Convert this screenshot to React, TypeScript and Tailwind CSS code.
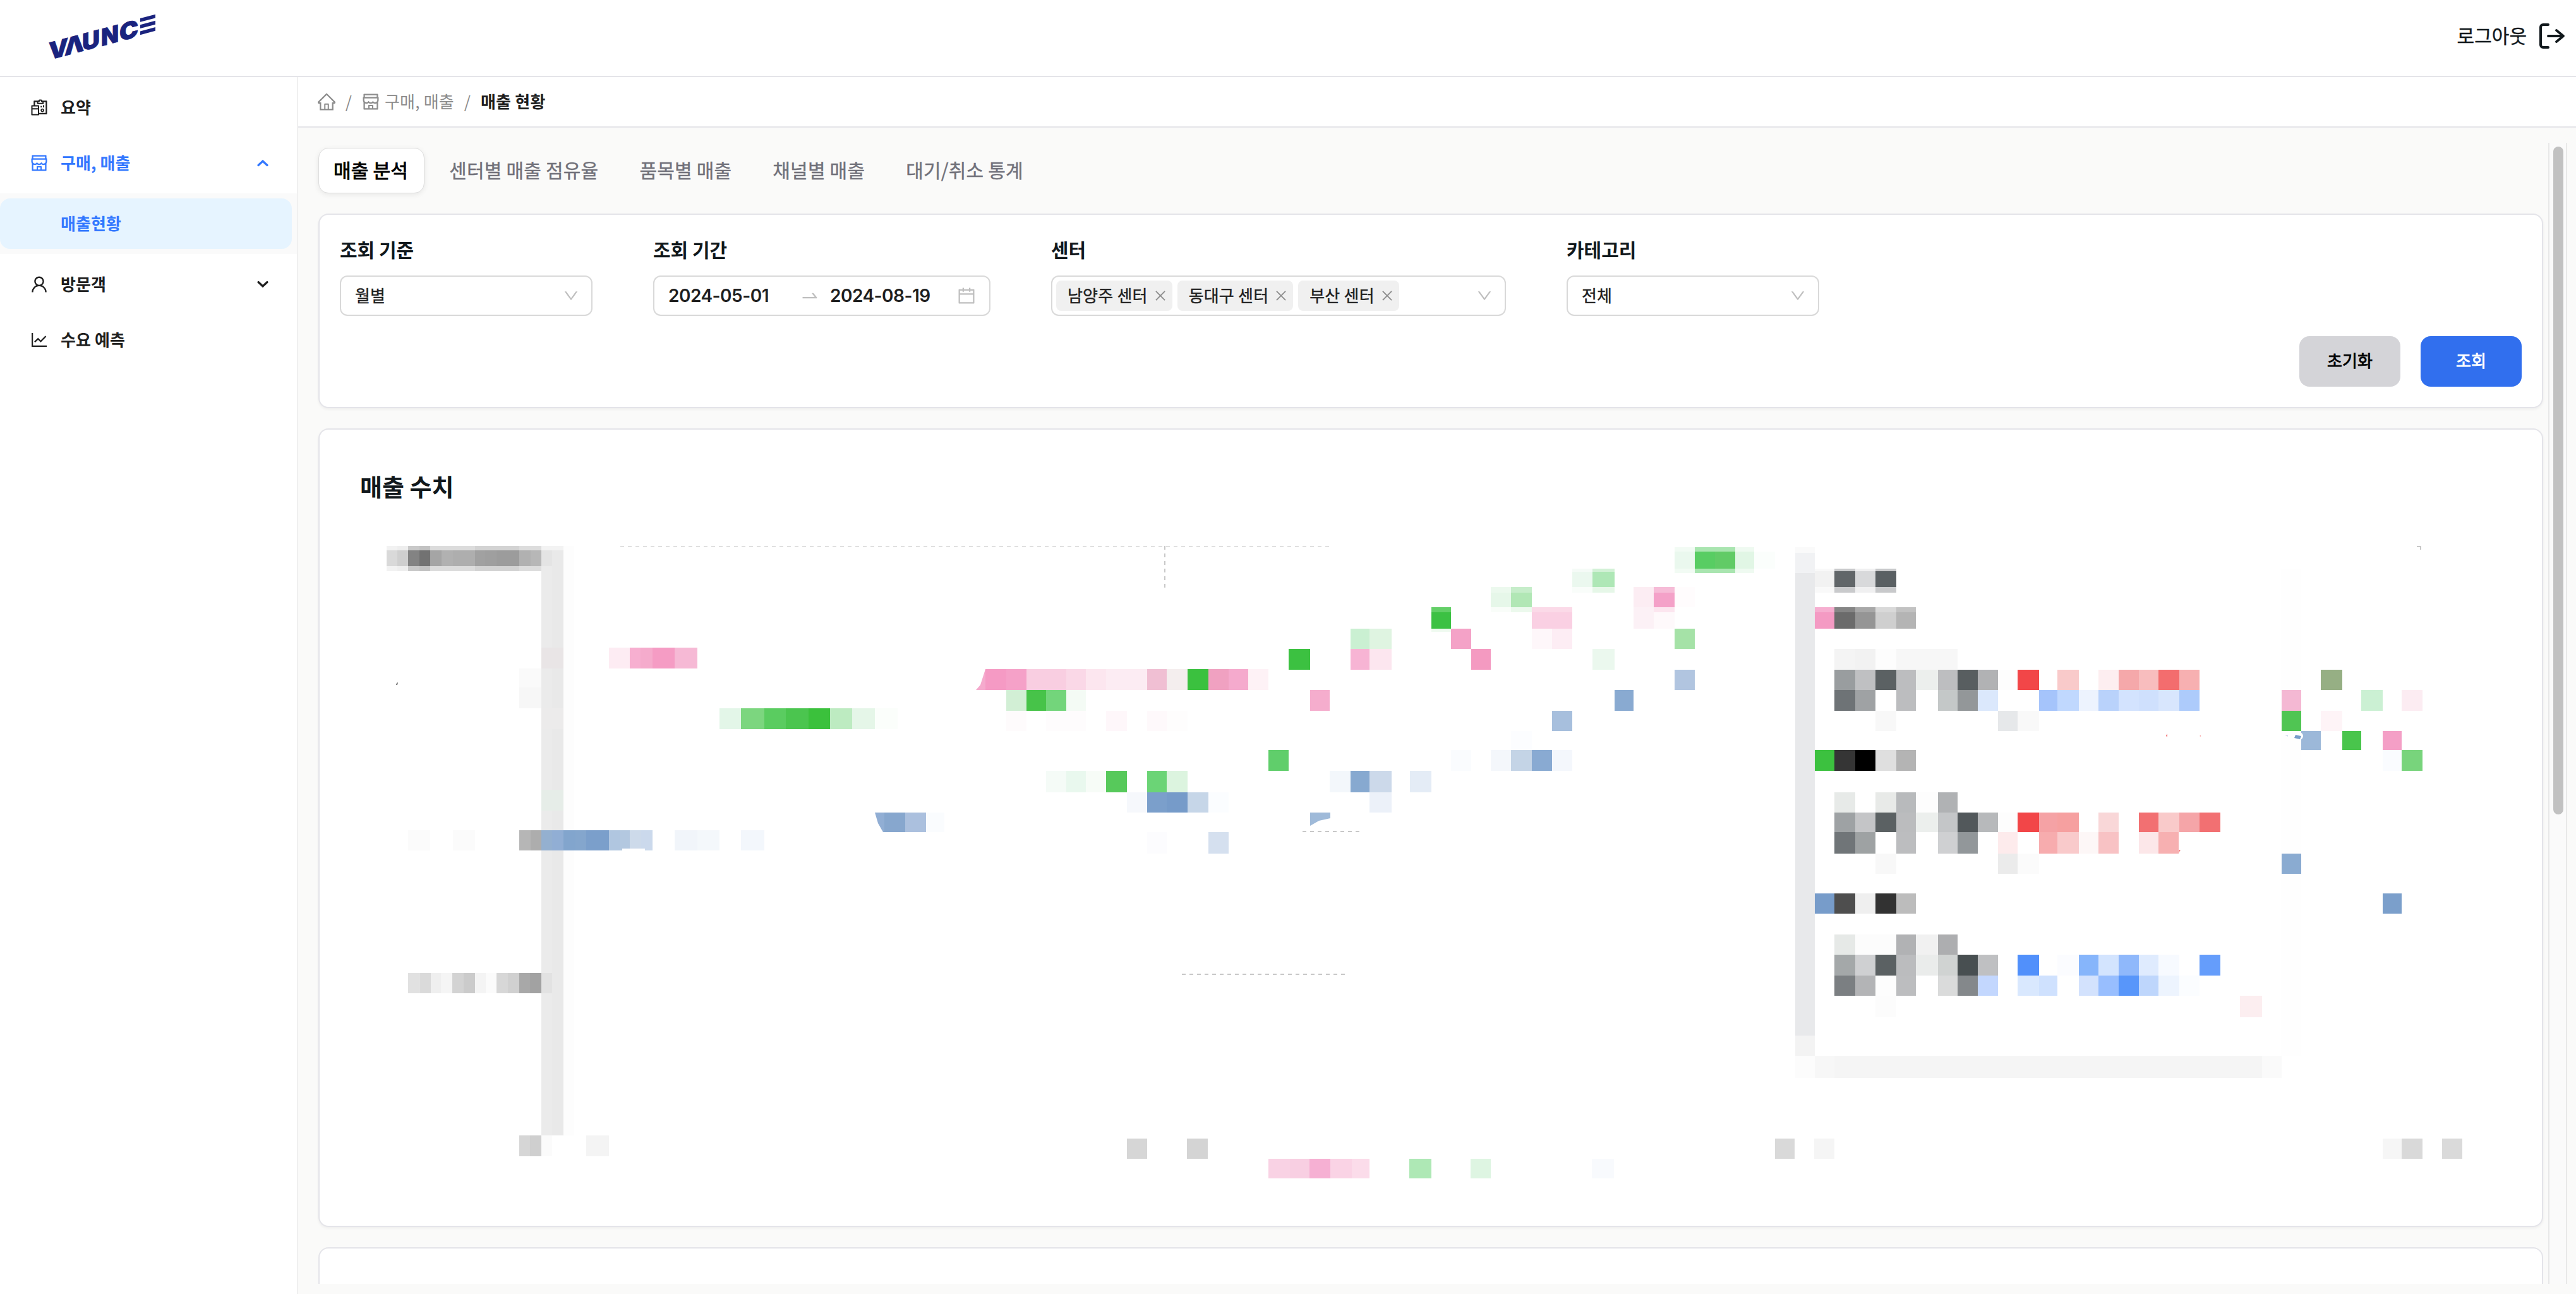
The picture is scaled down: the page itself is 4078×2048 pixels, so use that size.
import type { ReactNode } from "react";
import {
  AiOutlineCalendar,
  AiOutlineClose,
  AiOutlineDown,
  AiOutlineHome,
  AiOutlineLineChart,
  AiOutlineReconciliation,
  AiOutlineShop,
  AiOutlineSwapRight,
  AiOutlineUser,
} from "react-icons/ai";

/* Trims the built-in margin of the icon set. */
const ICON_BOX = "64 64 896 896";

/* ---------- Chart data ---------- */

type Band = [top: number, bottom: number, cells: [number, number, string][]];

const BANDS: Band[] = [
  // y axis
  [864, 1797, [[857, 874, "#ebebeb"], [874, 892, "#e9e9e9"], [892, 909, "#fdfdfd"]]],
  [864, 871, [[857, 892, "#f3f3f3"]]],
  [1025, 1058, [[857, 892, "#e9e5e6"]]],
  [1121, 1154, [[857, 892, "#ecebeb"]]],
  [1250, 1283, [[857, 892, "#e6ede8"]]],
  [864, 904, [[612, 629, "#f2f2f2"], [629, 646, "#eeeeee"], [646, 664, "#c9c9c9"], [664, 681, "#c2c2c2"], [681, 752, "#dcdcdc"], [752, 822, "#d3d3d3"], [822, 857, "#dddddd"]]],
  [871, 896, [[612, 629, "#d9d9d9"], [629, 646, "#cfcfcf"], [646, 664, "#838383"], [664, 681, "#727272"], [681, 699, "#a5a5a5"], [699, 717, "#b1b1b1"], [717, 752, "#aeaeae"], [752, 768, "#a1a1a1"], [768, 786, "#9f9f9f"], [786, 822, "#9c9c9c"], [822, 840, "#b1b1b1"], [840, 857, "#b7b7b7"], [857, 874, "#e4e4e4"]]],
  [1058, 1088, [[822, 857, "#fafafa"]]],
  [1088, 1121, [[822, 857, "#f7f7f7"]]],
  [1314, 1346, [[646, 681, "#fbfbfb"], [717, 752, "#fbfbfb"], [822, 840, "#b6b6b6"], [840, 857, "#adadad"], [857, 874, "#94b0d0"], [874, 892, "#91aed4"], [892, 911, "#82a5cd"], [911, 928, "#84a6cd"], [928, 964, "#7b9fcb"], [964, 981, "#b0c6e0"], [981, 997, "#b3c8e0"], [997, 1015, "#cddaea"], [1015, 1033, "#cbd9ec"], [1068, 1104, "#f1f5fa"], [1104, 1139, "#f4f8fb"], [1173, 1210, "#f3f7fc"]]],
  [1343, 1347, [[985, 1021, "#ffffff"]]],
  [1540, 1572, [[646, 665, "#e1e1e1"], [665, 682, "#dadada"], [682, 698, "#efefef"], [698, 716, "#f5f5f5"], [716, 734, "#d3d3d3"], [734, 752, "#cbcbcb"], [752, 769, "#f4f4f4"], [769, 786, "#fbfbfb"], [786, 804, "#d7d7d7"], [804, 822, "#d0d0d0"], [822, 839, "#a8a8a8"], [839, 857, "#a2a2a2"], [857, 874, "#e2e2e2"]]],
  [1797, 1830, [[822, 839, "#d6d6d6"], [839, 857, "#cfcfcf"], [857, 874, "#fbfbfb"], [928, 964, "#f4f4f4"]]],
  // first months
  [1025, 1058, [[964, 997, "#fdecf3"], [997, 1014, "#f7afd0"], [1014, 1033, "#f5abcc"], [1033, 1068, "#f59cc4"], [1068, 1104, "#f6b9d5"]]],
  [1121, 1154, [[1139, 1173, "#e3f6e8"], [1173, 1210, "#7cd67f"], [1210, 1244, "#5acc60"], [1244, 1280, "#4bc54f"], [1280, 1314, "#3bc13c"], [1314, 1349, "#bdebc1"], [1349, 1385, "#e5f6e8"], [1385, 1421, "#fbfefb"]]],
  [1286, 1317, [[1399, 1433, "#87a7ce"], [1433, 1466, "#abc0de"], [1466, 1495, "#fafcfe"]]],
  // middle months
  [1059, 1092, [[1560, 1593, "#f59ac4"], [1593, 1625, "#f5a1c8"], [1625, 1688, "#f9cee1"], [1688, 1719, "#fad8e7"], [1719, 1751, "#fce6ef"], [1751, 1816, "#fcecf3"], [1816, 1847, "#f0bfd3"], [1847, 1880, "#f4eeee"], [1880, 1913, "#3bc13f"], [1913, 1945, "#f0a1c1"], [1945, 1976, "#f5aacd"], [1976, 2008, "#fef2f6"]]],
  [1092, 1125, [[1593, 1625, "#d2efd5"], [1625, 1656, "#47c349"], [1656, 1688, "#73d57b"], [1688, 1719, "#f4fbf5"], [2074, 2105, "#f5adcd"], [2556, 2586, "#89aad1"]]],
  [1125, 1157, [[1593, 1625, "#fefbfc"], [1656, 1719, "#fefcfd"], [1751, 1784, "#fef7fa"], [1816, 1847, "#fef9fb"], [1847, 1880, "#fefdfd"], [2457, 2489, "#a7bfdd"]]],
  [1220, 1254, [[1656, 1688, "#f5fbf7"], [1688, 1719, "#e9f8ee"], [1719, 1751, "#f7fcf7"], [1751, 1784, "#57c95b"], [1816, 1847, "#6bd476"], [1847, 1880, "#dcf4df"], [2105, 2138, "#f3f7fb"], [2138, 2168, "#87a9d0"], [2168, 2203, "#ccd9ea"], [2232, 2266, "#e4ecf6"]]],
  [1254, 1286, [[1784, 1816, "#f6f8fc"], [1816, 1847, "#7b9fcb"], [1847, 1880, "#769bc9"], [1880, 1913, "#c6d6e8"], [1913, 1945, "#fbfdff"], [2168, 2203, "#ecf1f9"]]],
  [1317, 1351, [[1816, 1847, "#fcfcfe"], [1913, 1945, "#d5e0ef"]]],
  [1187, 1220, [[2008, 2040, "#60ce6b"], [2297, 2329, "#fafcfe"], [2360, 2392, "#f4f7fb"], [2392, 2425, "#c4d4e6"], [2425, 2457, "#89aad2"], [2457, 2489, "#f4f7fc"]]],
  [1157, 1187, [[2392, 2425, "#fcfdff"]]],
  [1027, 1060, [[2040, 2074, "#3cc141"], [2138, 2168, "#f7b4d4"], [2168, 2203, "#fce6ef"], [2329, 2360, "#f49ac1"], [2521, 2556, "#ebf8ee"]]],
  [995, 1027, [[2138, 2168, "#caf0d2"], [2168, 2203, "#dff4e1"], [2297, 2329, "#f4a2c7"], [2425, 2457, "#fef7fa"], [2457, 2489, "#fdedf4"], [2651, 2683, "#a5e2a7"]]],
  [961, 995, [[2266, 2297, "#3cc143"], [2425, 2489, "#fad0e3"], [2586, 2618, "#fcf1f6"], [2618, 2651, "#fef9fb"]]],
  [961, 969, [[2266, 2297, "#63cf67"], [2425, 2489, "#fbdae8"]]],
  [995, 1000, [[2266, 2297, "#effaf0"]]],
  [929, 961, [[2360, 2392, "#e6f7e9"], [2392, 2425, "#b1e7b5"], [2586, 2618, "#fcedf3"], [2618, 2651, "#f4a1c8"], [2651, 2683, "#fffcfd"]]],
  [929, 938, [[2360, 2392, "#ecf9ee"], [2392, 2425, "#c6edca"], [2618, 2651, "#f6bcd7"]]],
  [961, 969, [[2360, 2392, "#f9fdf9"], [2392, 2425, "#ecf9ed"], [2618, 2651, "#fce6ef"]]],
  [904, 929, [[2489, 2521, "#ebf8ef"], [2521, 2556, "#aee7b6"]]],
  [900, 905, [[2489, 2521, "#f5fbf7"], [2521, 2556, "#d2f1d6"]]],
  [929, 938, [[2489, 2521, "#f9fdfa"], [2521, 2556, "#e6f7e8"]]],
  [866, 907, [[2651, 2683, "#f2fbf4"], [2683, 2747, "#a9e5b0"], [2747, 2777, "#effaf1"]]],
  [873, 900, [[2651, 2683, "#eaf8ee"], [2683, 2715, "#58cd63"], [2715, 2747, "#61cb66"], [2747, 2777, "#e1f6e5"], [2777, 2810, "#fbfefc"]]],
  [1060, 1092, [[2651, 2683, "#b1c5e0"]]],
  // x axis and legend
  [1802, 1834, [[1784, 1816, "#d6d6d6"], [1879, 1912, "#d4d4d4"], [2810, 2841, "#d9d9d9"], [2872, 2904, "#f5f5f5"], [3772, 3802, "#f6f6f6"], [3802, 3835, "#d9d9d9"], [3866, 3898, "#dadada"]]],
  [1834, 1865, [[2008, 2042, "#f9d2e4"], [2042, 2073, "#f8cfe2"], [2073, 2106, "#f6b0d3"], [2106, 2140, "#fad3e5"], [2140, 2168, "#fbdcea"], [2231, 2266, "#aee8b5"], [2328, 2360, "#def5e2"], [2520, 2555, "#f8fafd"]]],
  // tooltip frame
  [866, 875, [[2842, 2873, "#fafafa"]]],
  [875, 907, [[2842, 2873, "#f1f2f4"]]],
  [907, 1639, [[2842, 2873, "#e8e9eb"]]],
  [900, 1671, [[3611, 3643, "#fefefe"]]],
  [1639, 1671, [[2842, 2873, "#f3f3f3"]]],
  [1671, 1706, [[2842, 2873, "#fcfcfc"], [2873, 2904, "#f7f7f7"], [2904, 3581, "#f5f5f5"], [3581, 3612, "#fafafa"]]],
  // tooltip contents
  [900, 938, [[2873, 2904, "#f9f9f9"], [2904, 2937, "#c9cacc"], [2937, 2969, "#f0f0f1"], [2969, 3002, "#c8c9cb"]]],
  [904, 929, [[2873, 2904, "#f2f2f2"], [2904, 2937, "#616669"], [2937, 2969, "#d8d9db"], [2969, 3002, "#5a6063"]]],
  [961, 995, [[2873, 2904, "#f49ac3"], [2904, 2937, "#6b6b6b"], [2937, 2969, "#959595"], [2969, 3002, "#cfcfcf"], [3002, 3033, "#b4b4b4"]]],
  [961, 969, [[2873, 2904, "#f6aed0"], [2904, 2937, "#858585"], [2937, 2969, "#a8a8a8"], [2969, 3002, "#d9d9d9"], [3002, 3033, "#c2c2c2"]]],
  [1027, 1060, [[2904, 2937, "#f4f4f4"], [2937, 2969, "#f2f2f2"], [2969, 3002, "#fdfdfd"], [3002, 3099, "#f7f7f7"]]],
  [1060, 1092, [[2904, 2937, "#999d9f"], [2937, 2969, "#bfc0c2"], [2969, 3002, "#5b6163"], [3002, 3033, "#bcbdbf"], [3033, 3068, "#ecefed"], [3068, 3099, "#bdbec0"], [3099, 3131, "#585e60"], [3131, 3163, "#b1b2b4"], [3163, 3194, "#fdfdfd"], [3194, 3228, "#f24648"], [3257, 3291, "#f9caca"], [3322, 3354, "#fdeef0"], [3354, 3386, "#f5a8aa"], [3386, 3417, "#f8bdbe"], [3417, 3450, "#f36d6e"], [3450, 3482, "#f7b0b1"]]],
  [1092, 1125, [[2904, 2937, "#6e7376"], [2937, 2969, "#9fa2a4"], [3002, 3033, "#bcbdbf"], [3068, 3099, "#c4c8c8"], [3099, 3131, "#939799"], [3131, 3163, "#dbe8fc"], [3228, 3257, "#a5c4fb"], [3257, 3291, "#c0d8fe"], [3291, 3322, "#edf3fe"], [3322, 3354, "#b9d2fb"], [3354, 3386, "#d3e3fe"], [3386, 3417, "#cfe0fd"], [3417, 3450, "#d8e6fd"], [3450, 3482, "#adcbfb"]]],
  [1125, 1157, [[2969, 3002, "#f8f8f8"], [3163, 3194, "#e6e8ea"], [3194, 3228, "#f9f9f9"]]],
  [1187, 1220, [[2873, 2904, "#3cc13f"], [2904, 2937, "#353535"], [2937, 2969, "#000000"], [2969, 3002, "#dfdfdf"], [3002, 3033, "#b4b4b4"]]],
  [1254, 1286, [[2904, 2937, "#e7eae8"], [2969, 3002, "#e8eae8"], [3002, 3033, "#b8babc"], [3033, 3068, "#fdfdfd"], [3068, 3099, "#b0b2b4"]]],
  [1286, 1317, [[2904, 2937, "#9ea2a4"], [2937, 2969, "#c4c5c7"], [2969, 3002, "#5b6163"], [3002, 3033, "#bbbcbe"], [3033, 3068, "#ecefed"], [3068, 3099, "#c4c6c8"], [3099, 3131, "#52585b"], [3131, 3163, "#b7b9bb"], [3163, 3194, "#fdfdfd"], [3194, 3228, "#f24648"], [3228, 3257, "#f5a2a5"], [3257, 3291, "#f6a0a0"], [3322, 3354, "#f9d7d8"], [3386, 3417, "#f27072"], [3417, 3450, "#f9caca"], [3450, 3482, "#f5a5a8"], [3482, 3515, "#f27072"]]],
  [1317, 1351, [[2904, 2937, "#707578"], [2937, 2969, "#9ea2a3"], [3002, 3033, "#bcbdbf"], [3068, 3099, "#cfd0d2"], [3099, 3131, "#92979a"], [3163, 3194, "#fdebec"], [3228, 3257, "#f7acae"], [3257, 3291, "#f9cacb"], [3291, 3322, "#fdf7f7"], [3322, 3354, "#f8c2c4"], [3386, 3417, "#fce7e9"], [3417, 3449, "#f7b0b1"]]],
  [1351, 1383, [[2969, 3002, "#f8f8f8"], [3163, 3194, "#ebebeb"], [3194, 3228, "#fbfbfb"]]],
  [1414, 1446, [[2873, 2904, "#779cca"], [2904, 2937, "#4e4e4e"], [2937, 2969, "#efefef"], [2969, 3002, "#323232"], [3002, 3033, "#bcbcbc"], [3772, 3802, "#7b9fcb"]]],
  [1479, 1511, [[2904, 2937, "#e6e9e7"], [2937, 3002, "#fcfcfc"], [3002, 3033, "#b1b2b4"], [3033, 3068, "#f1f1f1"], [3068, 3099, "#adaeb0"]]],
  [1511, 1544, [[2904, 2937, "#a4a8a9"], [2937, 2969, "#cfd0d2"], [2969, 3002, "#5b6163"], [3002, 3033, "#bbbcbe"], [3033, 3068, "#eaeceb"], [3068, 3099, "#d0d3d2"], [3099, 3131, "#484f51"], [3131, 3163, "#bfc0c2"], [3194, 3228, "#5190fb"], [3257, 3291, "#fbfcff"], [3291, 3322, "#86b5fb"], [3322, 3354, "#d3e4fe"], [3354, 3386, "#8fb8fb"], [3386, 3417, "#dfebfe"], [3417, 3450, "#f7faff"], [3482, 3515, "#659dfb"]]],
  [1544, 1576, [[2904, 2937, "#7b7f82"], [2937, 2969, "#b3b4b6"], [2969, 3002, "#fdfdfd"], [3002, 3033, "#bcbdbf"], [3068, 3099, "#dadbdb"], [3099, 3131, "#84888b"], [3131, 3163, "#c3d7fe"], [3194, 3228, "#d9e8fe"], [3228, 3257, "#cfe1fe"], [3291, 3322, "#d3e2fd"], [3322, 3354, "#98befe"], [3354, 3386, "#5896fa"], [3386, 3417, "#bed6fc"], [3417, 3450, "#edf4fe"], [3450, 3482, "#fbfdff"]]],
  [1576, 1610, [[2969, 3002, "#fcfcfc"], [3546, 3581, "#fceef0"]]],
  // last month
  [1060, 1092, [[3674, 3708, "#96af84"]]],
  [1092, 1125, [[3612, 3643, "#f4b8d3"], [3738, 3772, "#cbf0d3"], [3802, 3835, "#fcecf2"]]],
  [1125, 1157, [[3612, 3643, "#50c553"], [3674, 3708, "#fef4f7"]]],
  [1157, 1187, [[3643, 3674, "#9cb8d9"], [3708, 3738, "#49c54c"], [3772, 3802, "#f49fc6"]]],
  [1187, 1220, [[3772, 3802, "#fafcff"], [3802, 3835, "#78d47c"]]],
  [1351, 1383, [[3612, 3643, "#8aabd1"]]],
];

function SalesChart() {
  return (
    <svg className="block h-[1060px] w-full" viewBox="506 840 3518 1060" shapeRendering="crispEdges">
      <g stroke="#c8c8c8" fill="none">
        <path d="M982 864.5H2105" strokeWidth="1" strokeDasharray="6 6" />
        <path d="M1844 864V930" strokeWidth="2" strokeDasharray="6 6" />
        <path d="M2062 1316H2152" strokeWidth="2" strokeDasharray="6 6" />
        <path d="M1871 1542H2130" strokeWidth="2" strokeDasharray="6 6" />
        <path d="M3826 865H3832V870" strokeWidth="1.5" />
      </g>
      {BANDS.map(([top, bottom, cells], i) => (
        <g key={i}>
          {cells.map(([from, to, fill]) => (
            <rect key={from} x={from} y={top} width={to - from} height={bottom - top} fill={fill} />
          ))}
        </g>
      ))}
      <g shapeRendering="auto">
        <path d="M1545 1092L1552 1084L1560 1059V1092Z" fill="#f5aacd" />
        <path d="M1385 1286H1400V1317H1398L1390 1303Z" fill="#91aed4" />
        <path d="M2074 1286H2106V1295L2088 1299L2074 1307Z" fill="#9fbad9" />
        <path d="M627 1084L628 1081L630 1080L629 1084Z" fill="#666" />
        <path d="M3429 1165L3431 1161V1166Z" fill="#f24648" />
        <path d="M3482 1165L3484 1163V1166Z" fill="#f9b0b0" />
        <path d="M3449 1350L3452 1345L3450 1345Z" fill="#f27072" />
        <circle cx="3640" cy="1165" r="6" fill="#fff" />
        <path d="M3634 1163L3643 1165L3641 1170L3632 1168Z" fill="#779cca" />
        <path d="M3617 1163L3622 1163L3622 1166Z" fill="#d5e0ef" />
      </g>
    </svg>
  );
}

/* ---------- Header ---------- */

function Logo() {
  const letters: [string, number, number][] = [
    ["V", 77, 31],
    ["Λ", 102, 31],
    ["U", 130, 28],
    ["N", 160, 28],
    ["C", 189, 30],
  ];
  return (
    <svg className="h-[120px] w-[300px]" viewBox="0 0 300 120" fill="#1a237e" role="img" aria-label="VAUNCE">
      <g transform="matrix(1 -0.264 0 1 0 0)">
        {letters.map(([char, x, width]) => (
          <text
            key={x}
            x={x}
            y="115.4"
            textLength={width}
            lengthAdjust="spacingAndGlyphs"
            stroke="#1a237e"
            strokeWidth="0.8"
            className="font-[Inter] text-[37.5px] font-black"
          >
            {char}
          </text>
        ))}
        <rect x="222" y="87.6" width="24" height="5.8" />
        <rect x="222" y="97.8" width="24" height="5.8" />
        <rect x="222" y="108" width="24" height="5.8" />
      </g>
    </svg>
  );
}

function Header() {
  return (
    <header className="flex h-[122px] shrink-0 items-start justify-between border-b-2 border-[#e4e4e9] bg-white">
      <Logo />
      <button className="mr-4 flex h-[114px] items-center gap-[14px] text-[30px] text-[#11181c]">
        <span className="-mt-[4px] [-webkit-text-stroke:0.4px]">로그아웃</span>
        <svg className="size-12" viewBox="0 0 48 48" fill="none" stroke="currentColor" strokeWidth="4" strokeLinecap="round" strokeLinejoin="round">
          <path d="M20 6H12a4 4 0 0 0-4 4v28a4 4 0 0 0 4 4h8" />
          <path d="M20 24H44M33 15L44 24L33 33" strokeWidth="3.8" />
        </svg>
      </button>
    </header>
  );
}

/* ---------- Sidebar ---------- */

function Chevron({ up = false }: { up?: boolean }) {
  return (
    <svg className="mr-11 ml-auto h-3 w-5" viewBox="0 0 20 12" fill="none" stroke="currentColor" strokeWidth="3.2" strokeLinecap="round">
      <path d={up ? "M3 9.5L10 3L17 9.5" : "M3 2.5L10 9L17 2.5"} />
    </svg>
  );
}

function MenuItem({ icon, label, active, chevron }: { icon: ReactNode; label: string; active?: boolean; chevron?: ReactNode }) {
  return (
    <div className={`my-1 flex h-20 items-center pl-12 text-[26px] font-bold tracking-[0.1px] ${active ? "text-[#3378ff]" : "text-[#1f1f1f]"}`}>
      {icon}
      <span className="-mt-[3px] ml-5">{label}</span>
      {chevron}
    </div>
  );
}

function Sidebar() {
  return (
    <nav className="flex w-[472px] shrink-0 flex-col border-r-2 border-[#f0f0f0] bg-white pt-1">
      <MenuItem icon={<AiOutlineReconciliation viewBox={ICON_BOX} className="size-7" />} label="요약" />
      <MenuItem active icon={<AiOutlineShop viewBox={ICON_BOX} className="size-7" />} label="구매, 매출" chevron={<Chevron up />} />
      <div className="my-1 bg-[#fafafa] py-2">
        <div className="flex h-20 w-[462px] items-center rounded-2xl bg-[#e6f4ff] pl-24 text-[26px] font-bold tracking-[0.1px] text-[#3378ff]">
          <span className="-mt-[3px]">매출현황</span>
        </div>
      </div>
      <MenuItem icon={<AiOutlineUser viewBox={ICON_BOX} className="size-7" />} label="방문객" chevron={<Chevron />} />
      <MenuItem icon={<AiOutlineLineChart viewBox={ICON_BOX} className="size-7" />} label="수요 예측" />
    </nav>
  );
}

/* ---------- Content ---------- */

function Breadcrumb() {
  return (
    <div className="flex h-20 shrink-0 items-center border-b-2 border-[#e4e4e9] bg-white pl-[31px] text-[26px] tracking-[0.2px] text-[#8c8c8c]">
      <AiOutlineHome viewBox={ICON_BOX} className="size-7" />
      <span className="-mt-[3px] w-[42px] text-center">/</span>
      <AiOutlineShop viewBox={ICON_BOX} className="size-7" />
      <span className="-mt-[3px] ml-2">구매, 매출</span>
      <span className="-mt-[3px] w-[42px] text-center">/</span>
      <span className="-mt-[3px] font-bold text-[#1f1f1f]">매출 현황</span>
    </div>
  );
}

function Tabs() {
  return (
    <div className="flex h-[72px] items-center gap-[13px] text-[30px] tracking-[0.2px] text-[#71717a] [-webkit-text-stroke:0.4px]">
      <div className="flex h-[72px] items-center rounded-2xl border border-[#dedede] bg-white pr-[25px] pl-[23px] text-black shadow-[0_2px_8px_rgba(0,0,0,0.08)] [-webkit-text-stroke:0.9px]">
        <span className="-mt-[4px]">매출 분석</span>
      </div>
      <span className="-mt-[4px] px-[26px]">센터별 매출 점유율</span>
      <span className="-mt-[4px] px-[26px]">품목별 매출</span>
      <span className="-mt-[4px] px-[26px]">채널별 매출</span>
      <span className="-mt-[4px] px-[26px]">대기/취소 통계</span>
    </div>
  );
}

function Field({ label, width, children }: { label: string; width: string; children: ReactNode }) {
  return (
    <div className={width}>
      <div className="flex h-[60px] items-center text-[30px] font-bold text-[#11181c]">
        <span className="-mt-[4px]">{label}</span>
      </div>
      <div className="mt-[10px] flex h-16 items-center rounded-xl border-2 border-[#d9d9d9] bg-white text-[26px] text-[#1f1f1f]">
        {children}
      </div>
    </div>
  );
}

function Select({ value }: { value: string }) {
  return (
    <>
      <span className="-mt-[3px] ml-[22px] [-webkit-text-stroke:0.4px]">{value}</span>
      <AiOutlineDown viewBox={ICON_BOX} className="mr-5 ml-auto size-6 text-[#bfbfbf]" />
    </>
  );
}

function Filters() {
  return (
    <section className="h-[308px] shrink-0 rounded-2xl border-2 border-[#e4e4e9] bg-white px-8 pt-[26px] shadow-[0_2px_4px_rgba(0,0,0,0.05)]">
      <div className="flex gap-24">
        <Field label="조회 기준" width="w-[400px]">
          <Select value="월별" />
        </Field>
        <Field label="조회 기간" width="w-[534px]">
          <div className="flex w-full items-center font-[Inter] text-[28px] font-semibold">
            <span className="ml-[22px] w-[210px] tracking-[-0.5px]">2024-05-01</span>
            <AiOutlineSwapRight viewBox={ICON_BOX} className="size-7 text-[#bfbfbf]" />
            <span className="ml-[18px] tracking-[-0.5px]">2024-08-19</span>
            <AiOutlineCalendar viewBox={ICON_BOX} className="mr-[22px] ml-auto size-7 text-[#bfbfbf]" />
          </div>
        </Field>
        <Field label="센터" width="w-[720px]">
          <div className="ml-[6px] flex gap-2">
            {["남양주 센터", "동대구 센터", "부산 센터"].map((name) => (
              <div key={name} className="flex h-12 items-center rounded-lg bg-[#f0f0f0] pr-[9px] pl-[18px]">
                <span className="-mt-[3px] tracking-[0.2px] [-webkit-text-stroke:0.4px]">{name}</span>
                <AiOutlineClose viewBox={ICON_BOX} className="ml-[10px] size-5 text-[#8c8c8c]" />
              </div>
            ))}
          </div>
          <AiOutlineDown viewBox={ICON_BOX} className="mr-5 ml-auto size-6 text-[#bfbfbf]" />
        </Field>
        <Field label="카테고리" width="w-[400px]">
          <Select value="전체" />
        </Field>
      </div>
      <div className="mt-8 flex justify-end gap-8 text-[26px] [-webkit-text-stroke:0.8px]">
        <button className="h-20 w-40 rounded-2xl bg-[#d4d4d8] text-black">
          <span className="relative -top-[2px]">초기화</span>
        </button>
        <button className="h-20 w-40 rounded-2xl bg-[#316fee] text-white">
          <span className="relative -top-[2px]">조회</span>
        </button>
      </div>
    </section>
  );
}

export default function App() {
  return (
    <div className="flex h-[2048px] w-[4078px] flex-col overflow-hidden bg-[#fafaf9] font-['Noto_Sans_CJK_KR',sans-serif] leading-none">
      <Header />
      <div className="flex min-h-0 flex-1">
        <Sidebar />
        <div className="flex min-w-0 flex-1 flex-col">
          <Breadcrumb />
          <main className="flex min-h-0 flex-1 pt-6 pr-[14px] pb-4">
            <div className="flex min-w-0 flex-1 flex-col gap-8 overflow-hidden pt-2 pr-2 pl-8">
              <Tabs />
              <Filters />
              <section className="h-[1264px] shrink-0 rounded-2xl border-2 border-[#e4e4e9] bg-white shadow-[0_2px_4px_rgba(0,0,0,0.05)]">
                <h2 className="flex h-40 items-center pt-[18px] pl-16 text-[38px] font-bold text-[#11181c]">매출 수치</h2>
                <SalesChart />
              </section>
              <section className="h-[400px] shrink-0 rounded-2xl border-2 border-[#e4e4e9] bg-white" />
            </div>
            <div className="w-[30px] border-x-2 border-[#e8e8e8] bg-[#fafafa] pt-[6px] pl-[6px]">
              <div className="h-[1057px] w-4 rounded-full bg-[#c1c1c1]" />
            </div>
          </main>
        </div>
      </div>
    </div>
  );
}
